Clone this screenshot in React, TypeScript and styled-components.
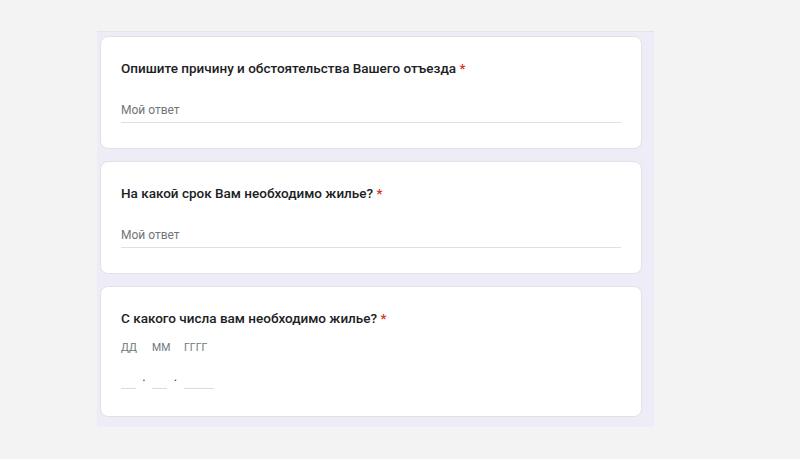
import React from 'react';
import styled, { createGlobalStyle } from 'styled-components';

const GlobalStyle = createGlobalStyle`
  html, body {
    margin: 0;
    padding: 0;
    background: #f3f3f3;
    font-family: Roboto, "Noto Sans", Arial, sans-serif;
  }
`;

interface Question {
  title: string;
  kind: 'text' | 'date';
}

const questions: Question[] = [
  { title: 'Опишите причину и обстоятельства Вашего отъезда', kind: 'text' },
  { title: 'На какой срок Вам необходимо жилье?', kind: 'text' },
  { title: 'С какого числа вам необходимо жилье?', kind: 'date' },
];

const App: React.FC = () => {
  return (
    <Page>
      <GlobalStyle />
      <Panel>
        {questions.map((q) => (
          <Card key={q.title} $date={q.kind === 'date'}>
            <Title>
              {q.title} <Req>*</Req>
            </Title>
            {q.kind === 'text' ? (
              <Answer>Мой ответ</Answer>
            ) : (
              <DateGrid>
                <DateLabel>ДД</DateLabel>
                <span />
                <DateLabel>ММ</DateLabel>
                <span />
                <DateLabel>ГГГГ</DateLabel>
                <DateLine />
                <Dot>.</Dot>
                <DateLine />
                <Dot>.</Dot>
                <DateLine />
              </DateGrid>
            )}
          </Card>
        ))}
      </Panel>
    </Page>
  );
};

export default App;

const Page = styled.div`
  width: 800px;
  height: 459px;
  padding: 31px 0 0 97px;
  box-sizing: border-box;
`;

const Panel = styled.div`
  width: 557px;
  box-sizing: border-box;
  background: #eeecf6;
  border-top: 1px solid #e4e2ec;
  padding: 4px 12px 10px 3px;
  display: flex;
  flex-direction: column;
  gap: 12px;
`;

const Card = styled.div<{ $date?: boolean }>`
  background: #fff;
  border: 1px solid #e2e1e8;
  border-radius: 8px;
  padding: 21px 20px ${(p) => (p.$date ? 27 : 25)}px 20px;
  display: flex;
  flex-direction: column;
`;

const Title = styled.div`
  font-size: 13.5px;
  line-height: 20px;
  font-weight: 500;
  color: #202124;
`;

const Req = styled.span`
  color: #d93025;
`;

const Answer = styled.div`
  margin-top: 24px;
  font-size: 12px;
  line-height: 16px;
  color: #70757a;
  padding-bottom: 4px;
  border-bottom: 1px solid #e0e0e0;
`;

const DateGrid = styled.div`
  margin-top: 13px;
  display: grid;
  grid-template-columns: 15px 16px 15px 17px 30px;
  grid-template-rows: 14px 29px;
  row-gap: 5px;
`;

const DateLabel = styled.span`
  font-size: 10.5px;
  line-height: 14px;
  color: #70757a;
  white-space: nowrap;
`;

const DateLine = styled.div`
  border-bottom: 1px solid #dadce0;
`;

const Dot = styled.span`
  align-self: end;
  justify-self: center;
  font-size: 13px;
  line-height: 12px;
  color: #3c4043;
  padding-bottom: 6px;
`;
